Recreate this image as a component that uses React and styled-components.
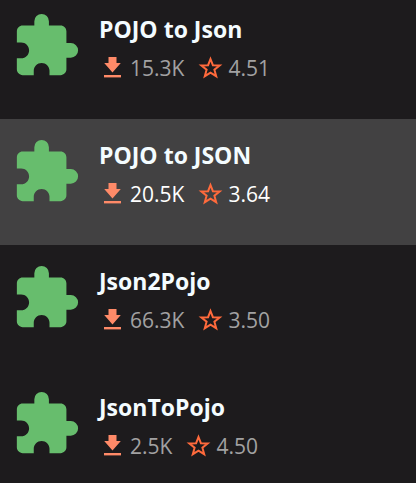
import { useState } from 'react'
import styled, { createGlobalStyle } from 'styled-components'
import { MdExtension } from 'react-icons/md'

const GlobalStyle = createGlobalStyle`
  body {
    margin: 0;
    background-color: #1d1b1d;
    font-family: "Open Sans", "Noto Sans", sans-serif;
  }
`

const List = styled.ul`
  list-style: none;
  margin: 0;
  padding: 0;
  /* the list is scrolled a little, so the first row starts above the edge */
  margin-top: -7px;
`

const Row = styled.li`
  display: flex;
  gap: 18px;
  box-sizing: border-box;
  height: 126px;
  padding: 15px 11px;
  cursor: pointer;
  background-color: ${p => p.$active ? "#424142" : "transparent"};
`

const Logo = styled.div`
  flex: none;
  padding-top: 3px;
  color: #67bd6d;

  > svg {
    display: block;
    width: 70px;
    height: 70px;
  }
`

const Info = styled.div`
  min-width: 0;
`

const Title = styled.h3`
  margin: 0;
  font-size: 23px;
  line-height: 42px;
  font-weight: 700;
  color: #f4fcff;
`

const Stats = styled.div`
  display: flex;
  gap: 13px;
`

const Stat = styled.span`
  display: flex;
  align-items: center;
  gap: 5px;
  font-size: 21px;
  line-height: 36px;
  color: ${p => p.$active ? "#ffffff" : "#a2a1a2"};

  > svg {
    width: 26px;
    height: 26px;
  }
`

const DownloadIcon = () => (
  <svg viewBox="0 0 26 26" fill="#ff8a68" aria-hidden="true">
    <path d="M9.500 2h8v6h4.300L13.500 17.500 5.200 8H9.500z" />
    <path d="M5 20h17v2.400H5z" />
  </svg>
)

const StarIcon = () => (
  <svg viewBox="0 0 26 26" fill="none" stroke="#ff6a3c" strokeWidth="2" strokeMiterlimit="10" aria-hidden="true">
    <path d="M13.500 4 15.900 10.200 22.700 10.500 17.400 14.700 19.200 21.200 13.500 17.600 7.800 21.200 9.600 14.700 4.300 10.500 11.100 10.200z" />
  </svg>
)

const plugins = [
  { id: 1, name: "POJO to Json", downloads: "15.3K", rating: "4.51" },
  { id: 2, name: "POJO to JSON", downloads: "20.5K", rating: "3.64" },
  { id: 3, name: "Json2Pojo", downloads: "66.3K", rating: "3.50" },
  { id: 4, name: "JsonToPojo", downloads: "2.5K", rating: "4.50" },
]

function App() {
  const [selected, setSelected] = useState(2)

  return (
    <>
      <GlobalStyle />
      <List>
        {plugins.map((p) => {
          const active = p.id === selected
          return <Row key={p.id} $active={active} onClick={() => setSelected(p.id)}>
            <Logo><MdExtension /></Logo>
            <Info>
              <Title>{p.name}</Title>
              <Stats>
                <Stat $active={active}><DownloadIcon />{p.downloads}</Stat>
                <Stat $active={active}><StarIcon />{p.rating}</Stat>
              </Stats>
            </Info>
          </Row>
        })}
      </List>
    </>
  )
}

export default App
